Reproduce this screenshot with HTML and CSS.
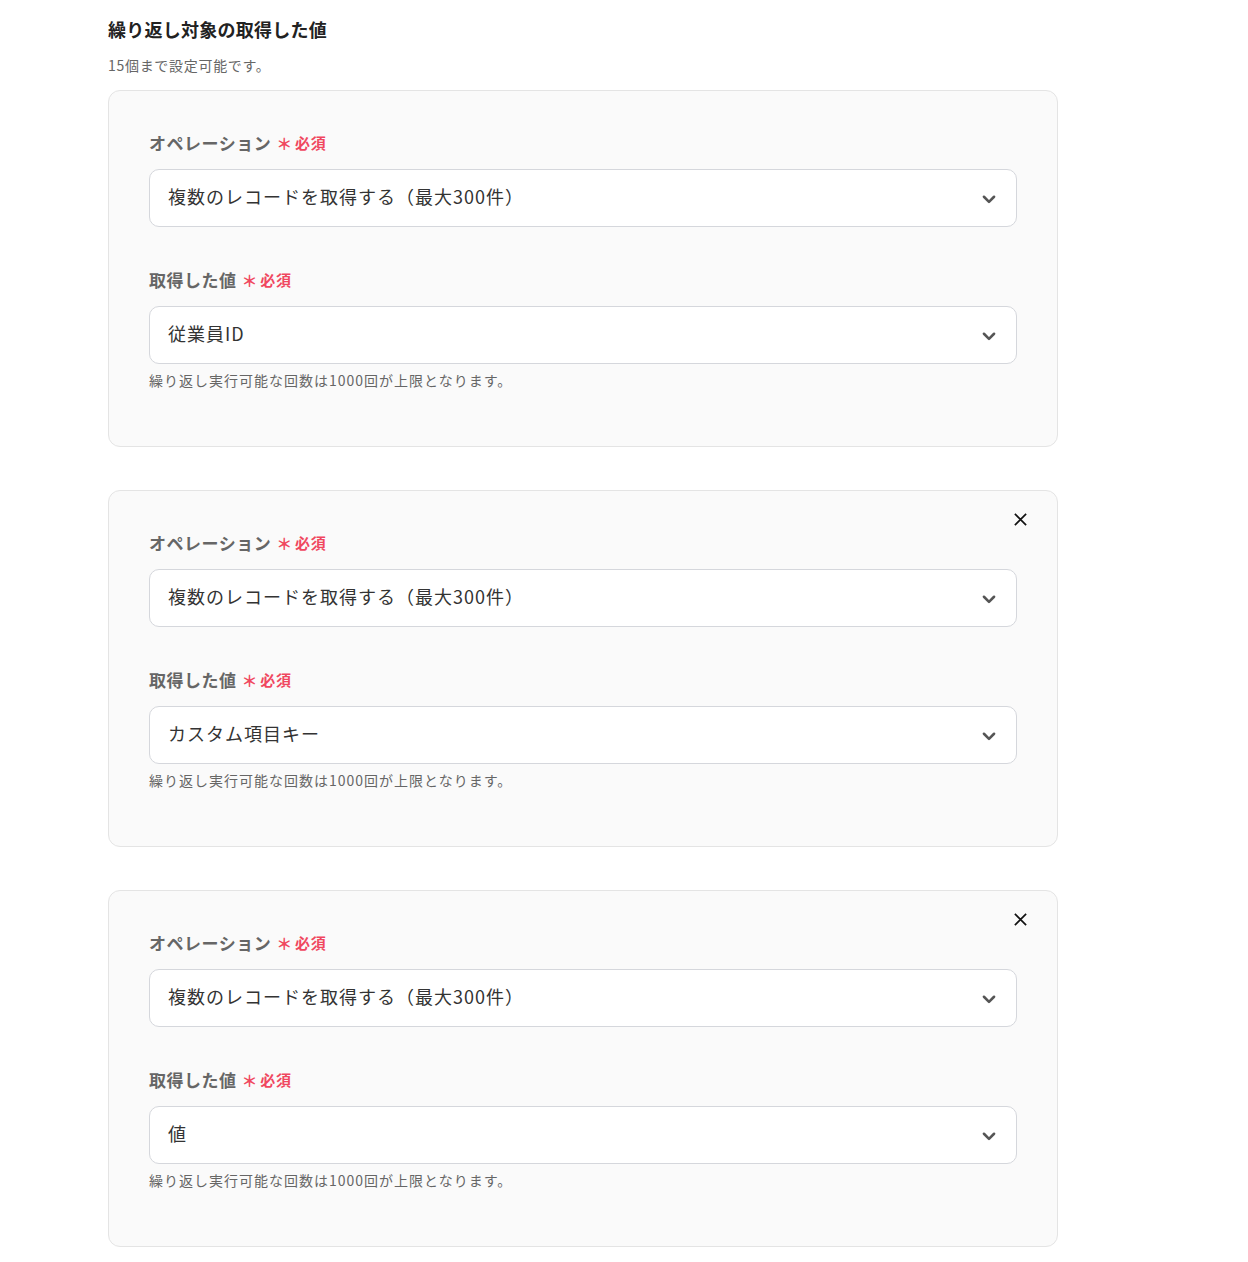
FILE: index.html
```html
<!DOCTYPE html>
<html lang="ja">
<head>
<meta charset="utf-8">
<link rel="stylesheet" href="styles.css">
</head>
<body>
<div class="page">
  <h2 class="title">繰り返し対象の取得した値</h2>
  <p class="sub">15個まで設定可能です。</p>

  <div class="card">
    <div class="field">
      <div class="label">オペレーション<span class="req"><span class="ast">＊</span>必須</span></div>
      <div class="select"><span class="val">複数のレコードを取得する（最大300件）</span><svg class="chev" viewBox="0 0 16 16"><path d="M3.5 6l4.5 4.5L12.5 6" fill="none" stroke="currentColor" stroke-width="2.3" stroke-linecap="round" stroke-linejoin="round"/></svg></div>
    </div>
    <div class="field second">
      <div class="label">取得した値<span class="req"><span class="ast">＊</span>必須</span></div>
      <div class="select"><span class="val">従業員ID</span><svg class="chev" viewBox="0 0 16 16"><path d="M3.5 6l4.5 4.5L12.5 6" fill="none" stroke="currentColor" stroke-width="2.3" stroke-linecap="round" stroke-linejoin="round"/></svg></div>
      <p class="help">繰り返し実行可能な回数は1000回が上限となります。</p>
    </div>
  </div>

  <div class="card">
    <svg class="close" viewBox="0 0 16 16"><path d="M2 2l12 12M14 2L2 14" fill="none" stroke="currentColor" stroke-width="1.8"/></svg>
    <div class="field">
      <div class="label">オペレーション<span class="req"><span class="ast">＊</span>必須</span></div>
      <div class="select"><span class="val">複数のレコードを取得する（最大300件）</span><svg class="chev" viewBox="0 0 16 16"><path d="M3.5 6l4.5 4.5L12.5 6" fill="none" stroke="currentColor" stroke-width="2.3" stroke-linecap="round" stroke-linejoin="round"/></svg></div>
    </div>
    <div class="field second">
      <div class="label">取得した値<span class="req"><span class="ast">＊</span>必須</span></div>
      <div class="select"><span class="val">カスタム項目キー</span><svg class="chev" viewBox="0 0 16 16"><path d="M3.5 6l4.5 4.5L12.5 6" fill="none" stroke="currentColor" stroke-width="2.3" stroke-linecap="round" stroke-linejoin="round"/></svg></div>
      <p class="help">繰り返し実行可能な回数は1000回が上限となります。</p>
    </div>
  </div>

  <div class="card">
    <svg class="close" viewBox="0 0 16 16"><path d="M2 2l12 12M14 2L2 14" fill="none" stroke="currentColor" stroke-width="1.8"/></svg>
    <div class="field">
      <div class="label">オペレーション<span class="req"><span class="ast">＊</span>必須</span></div>
      <div class="select"><span class="val">複数のレコードを取得する（最大300件）</span><svg class="chev" viewBox="0 0 16 16"><path d="M3.5 6l4.5 4.5L12.5 6" fill="none" stroke="currentColor" stroke-width="2.3" stroke-linecap="round" stroke-linejoin="round"/></svg></div>
    </div>
    <div class="field second">
      <div class="label">取得した値<span class="req"><span class="ast">＊</span>必須</span></div>
      <div class="select"><span class="val">値</span><svg class="chev" viewBox="0 0 16 16"><path d="M3.5 6l4.5 4.5L12.5 6" fill="none" stroke="currentColor" stroke-width="2.3" stroke-linecap="round" stroke-linejoin="round"/></svg></div>
      <p class="help">繰り返し実行可能な回数は1000回が上限となります。</p>
    </div>
  </div>
</div>
</body>
</html>
```

FILE: styles.css
```css
* { box-sizing: border-box; }
body {
  margin: 0;
  background: #fff;
  font-family: "Noto Sans CJK JP", "Noto Sans", sans-serif;
  color: #333;
}
.page {
  padding: 16px 0 0 108px;
  width: 1058px;
}
.title {
  margin: 0;
  font-size: 18px;
  line-height: 26px;
  font-weight: 700;
  color: #222;
  letter-spacing: 0.25px;
}
.sub {
  margin: 13px 0 0;
  font-size: 14px;
  line-height: 20px;
  color: #666;
  letter-spacing: 0.7px;
}
.card {
  position: relative;
  margin-top: 15px;
  margin-bottom: 43px;
  background: #fafafa;
  border: 1px solid #e4e4e4;
  border-radius: 12px;
  padding: 42px 40px 57px;
}
.card + .card { margin-top: 0; }
.close {
  position: absolute;
  top: 21px;
  right: 29px;
  width: 15px;
  height: 15px;
  color: #111;
}
.field.second { margin-top: 43px; }
.label {
  display: flex;
  align-items: center;
  font-size: 17px;
  line-height: 20px;
  font-weight: 700;
  color: #666;
  letter-spacing: 0.5px;
}
.req {
  margin-left: 5px;
  font-size: 15px;
  color: #f0475f;
  display: inline-flex;
  align-items: center;
  letter-spacing: 0.8px;
}
.ast {
  font-size: 16px;
  margin-right: 2px;
}
.select {
  margin-top: 16px;
  height: 58px;
  background: #fff;
  border: 1px solid #d5d7dc;
  border-radius: 10px;
  display: flex;
  align-items: center;
  justify-content: space-between;
  padding: 0 18px 0 18px;
  font-size: 18px;
  color: #333;
  letter-spacing: 1px;
}
.val {
  padding-bottom: 4px;
}
.chev {
  width: 18px;
  height: 18px;
  margin-top: 2px;
  color: #555;
}
.help {
  margin: 7px 0 0;
  font-size: 14px;
  line-height: 18px;
  color: #666;
  letter-spacing: 1px;
}
```
